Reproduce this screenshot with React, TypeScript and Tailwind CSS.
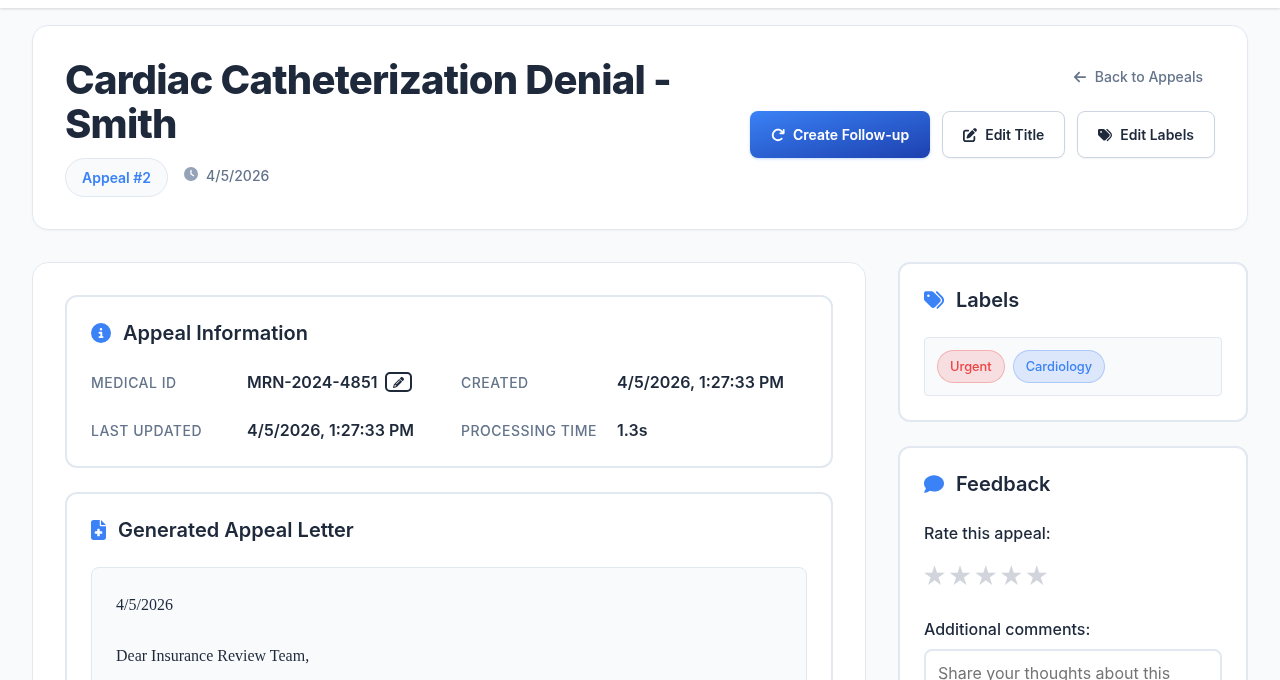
import { FaArrowLeft, FaArrowRotateRight, FaPenToSquare, FaTags, FaClock, FaCircleInfo, FaPencil, FaFileMedical, FaComment } from "react-icons/fa6";

function Info({ label, value, children }: { label: string; value: string; children?: React.ReactNode }) {
  return (
    <div className="flex items-center">
      <span className="w-[156px] shrink-0 text-[14px] font-medium tracking-[0.5px] text-[#64748b]">{label}</span>
      <span className="text-[16px] font-semibold text-[#1e293b]">{value}</span>
      {children}
    </div>
  );
}

export default function App() {
  return (
    <div className="h-[680px] overflow-hidden bg-[#f8fafc] font-['Inter',sans-serif] text-[#1e293b]">
      <div className="h-[8px] bg-white shadow-[0_1px_3px_rgba(0,0,0,0.15)]" />
      <div className="mx-auto w-[1216px] pt-[17px] will-change-transform">
        <header className="flex h-[205px] items-start justify-between rounded-2xl border border-[#e2e8f0] bg-white pl-[32px] pr-[32px] pt-[32px] shadow-[0_1px_3px_rgba(0,0,0,0.04)]">
          <div className="w-[660px]">
            <h1 className="text-[40px] font-extrabold leading-[44px] tracking-[-0.8px] text-[#1e293b]">Cardiac Catheterization Denial - Smith</h1>
            <div className="mt-[12px] flex items-start">
              <span className="flex h-[39px] items-center rounded-[20px] border border-[#e2e8f0] bg-[#f8fafc] px-4 text-[14px] font-semibold text-[#3b82f6]">Appeal #2</span>
              <span className="ml-4 mt-[7px] flex items-center gap-2 text-[14px] font-medium text-[#64748b]">
                <FaClock className="mb-[4px] size-[14px] text-[#94a3b8]" />
                4/5/2026
              </span>
            </div>
          </div>
          <div className="flex flex-col items-end">
            <a className="mr-[12px] mt-[8px] flex items-center gap-2 text-[14px] font-medium text-[#64748b]">
              <FaArrowLeft className="size-[14px]" />
              Back to Appeals
            </a>
            <div className="mt-[24px] flex gap-3">
              <button className="flex h-[47px] items-center gap-2 rounded-lg bg-gradient-to-br from-[#3b82f6] to-[#1e40af] px-[21px] text-[14px] font-semibold text-white shadow-[0_1px_3px_rgba(59,130,246,0.3)]">
                <FaArrowRotateRight className="size-[14px]" />
                Create Follow-up
              </button>
              <button className="flex h-[47px] items-center gap-2 rounded-lg border border-[#cbd5e1] bg-white px-5 text-[14px] font-semibold text-[#1e293b] shadow-[0_1px_2px_rgba(0,0,0,0.05)]">
                <FaPenToSquare className="size-[14px]" />
                Edit Title
              </button>
              <button className="flex h-[47px] items-center gap-2 rounded-lg border border-[#cbd5e1] bg-white px-5 text-[14px] font-semibold text-[#1e293b] shadow-[0_1px_2px_rgba(0,0,0,0.05)]">
                <FaTags className="size-[14px]" />
                Edit Labels
              </button>
            </div>
          </div>
        </header>

        <div className="mt-[32px] grid grid-cols-[834px_350px] gap-[32px]">
          <main className="h-[600px] rounded-2xl border border-[#e2e8f0] bg-white px-[32px] pt-[32px]">
            <section className="h-[173px] rounded-xl border-2 border-[#e2e8f0] bg-white px-6 pt-[24px]">
              <h2 className="flex h-[24px] items-center gap-3 text-[20px] font-semibold">
                <FaCircleInfo className="size-[20px] text-[#3b82f6]" />
                Appeal Information
              </h2>
              <div className="mt-[25px] grid grid-cols-[370px_1fr] gap-y-[24px]">
                <Info label="MEDICAL ID" value="MRN-2024-4851">
                  <span className="ml-[8px] flex h-[20px] w-[27px] items-center justify-center rounded-[5px] border-2 border-[#1e293b]">
                    <FaPencil className="size-[11px]" />
                  </span>
                </Info>
                <Info label="CREATED" value="4/5/2026, 1:27:33 PM" />
                <Info label="LAST UPDATED" value="4/5/2026, 1:27:33 PM" />
                <Info label="PROCESSING TIME" value="1.3s" />
              </div>
            </section>
            <section className="mt-[24px] h-[400px] rounded-xl border-2 border-[#e2e8f0] bg-white px-6 pt-[24px]">
              <h2 className="flex h-[24px] items-center gap-3 text-[20px] font-semibold">
                <FaFileMedical className="h-[20px] w-[15px] text-[#3b82f6]" />
                Generated Appeal Letter
              </h2>
              <div className="mt-[25px] h-[300px] rounded-lg border border-[#e2e8f0] bg-[#f8fafc] px-6 pt-[24px] font-['Liberation_Serif',serif] text-[16px] leading-[26px]">
                <p>4/5/2026</p>
                <p className="mt-[25px]">Dear Insurance Review Team,</p>
              </div>
            </section>
          </main>

          <aside className="flex flex-col gap-[24px]">
            <section className="h-[160px] rounded-xl border-2 border-[#e2e8f0] bg-white px-6 pt-[24px]">
              <h3 className="flex h-[24px] items-center gap-3 text-[20px] font-semibold">
                <FaTags className="size-[20px] text-[#3b82f6]" />
                Labels
              </h3>
              <div className="mt-[25px] flex h-[59px] items-start gap-2 rounded border border-[#e2e8f0] bg-[#f8fafc] p-3">
                <span className="flex h-[33px] items-center rounded-[20px] border border-[#ef4444]/30 bg-[#ef4444]/15 px-3 text-[12.8px] font-medium text-[#ef4444]">Urgent</span>
                <span className="flex h-[33px] items-center rounded-[20px] border border-[#3b82f6]/30 bg-[#3b82f6]/15 px-3 text-[12.8px] font-medium text-[#3b82f6]">Cardiology</span>
              </div>
            </section>
            <section className="h-[400px] rounded-xl border-2 border-[#e2e8f0] bg-white px-6 pt-[24px]">
              <h3 className="flex h-[24px] items-center gap-3 text-[20px] font-semibold">
                <FaComment className="size-[20px] text-[#3b82f6]" />
                Feedback
              </h3>
              <p className="mt-[25px] text-[16px] font-medium leading-[24px]">Rate this appeal:</p>
              <div className="ml-[-2px] mt-[14px] flex gap-[0.5px] text-[24px] leading-[36px] text-[#d1d5db]">
                <span>★</span><span>★</span><span>★</span><span>★</span><span>★</span>
              </div>
              <p className="mt-[22px] text-[16px] font-medium leading-[24px]">Additional comments:</p>
              <textarea
                className="mt-[8px] h-[120px] w-full resize-none rounded-lg border-2 border-[#e2e8f0] bg-white px-3 py-[10px] text-[16px] leading-[24px] placeholder:text-[#757575]"
                placeholder="Share your thoughts about this appeal..."
              />
            </section>
          </aside>
        </div>
      </div>
    </div>
  );
}
